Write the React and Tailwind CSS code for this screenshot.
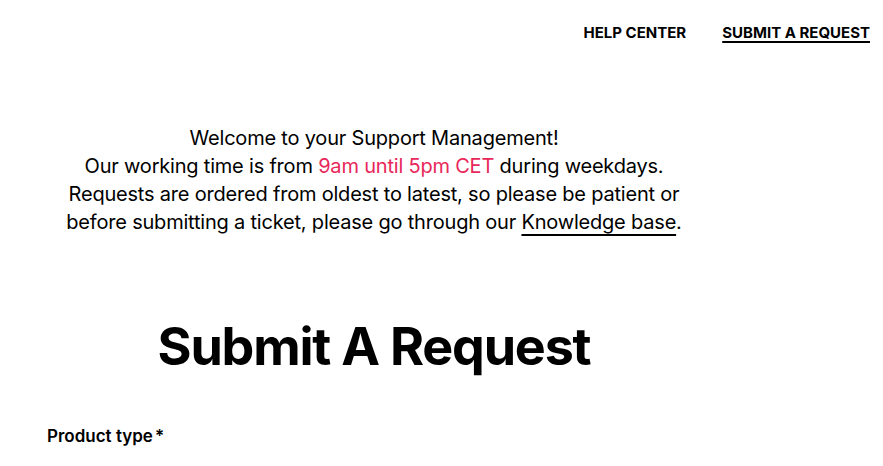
export default function App() {
  return (
    <div className="min-h-[466px] bg-white text-black" style={{ fontFamily: 'Inter, "Liberation Sans", sans-serif' }}>
      <header className="flex justify-end gap-9 pr-[13px] pt-[23px] text-[15px] font-bold leading-5">
        <a>HELP CENTER</a>
        <a className="underline decoration-2 underline-offset-[3px]">SUBMIT A REQUEST</a>
      </header>
      <div className="w-[748px]">
        <p className="mt-[81px] text-center text-[20px] leading-[28px] tracking-[-0.2px]">
          Welcome to your Support Management!
          <br />
          Our working time is from <span className="text-[#e8285a]">9am until 5pm CET</span> during weekdays.
          <br />
          Requests are ordered from oldest to latest, so please be patient or
          <br />
          before submitting a ticket, please go through our{' '}
          <a className="underline decoration-2 underline-offset-[5px]">Knowledge base</a>.
        </p>
        <h1 className="mt-[81px] text-center text-[52px] font-bold leading-[60px] tracking-[-1.2px]">Submit A Request</h1>
        <label className="mt-[47px] block pl-[47px] text-[17px] font-semibold leading-6">
          Product type<span className="ml-0.5">*</span>
        </label>
      </div>
    </div>
  );
}
